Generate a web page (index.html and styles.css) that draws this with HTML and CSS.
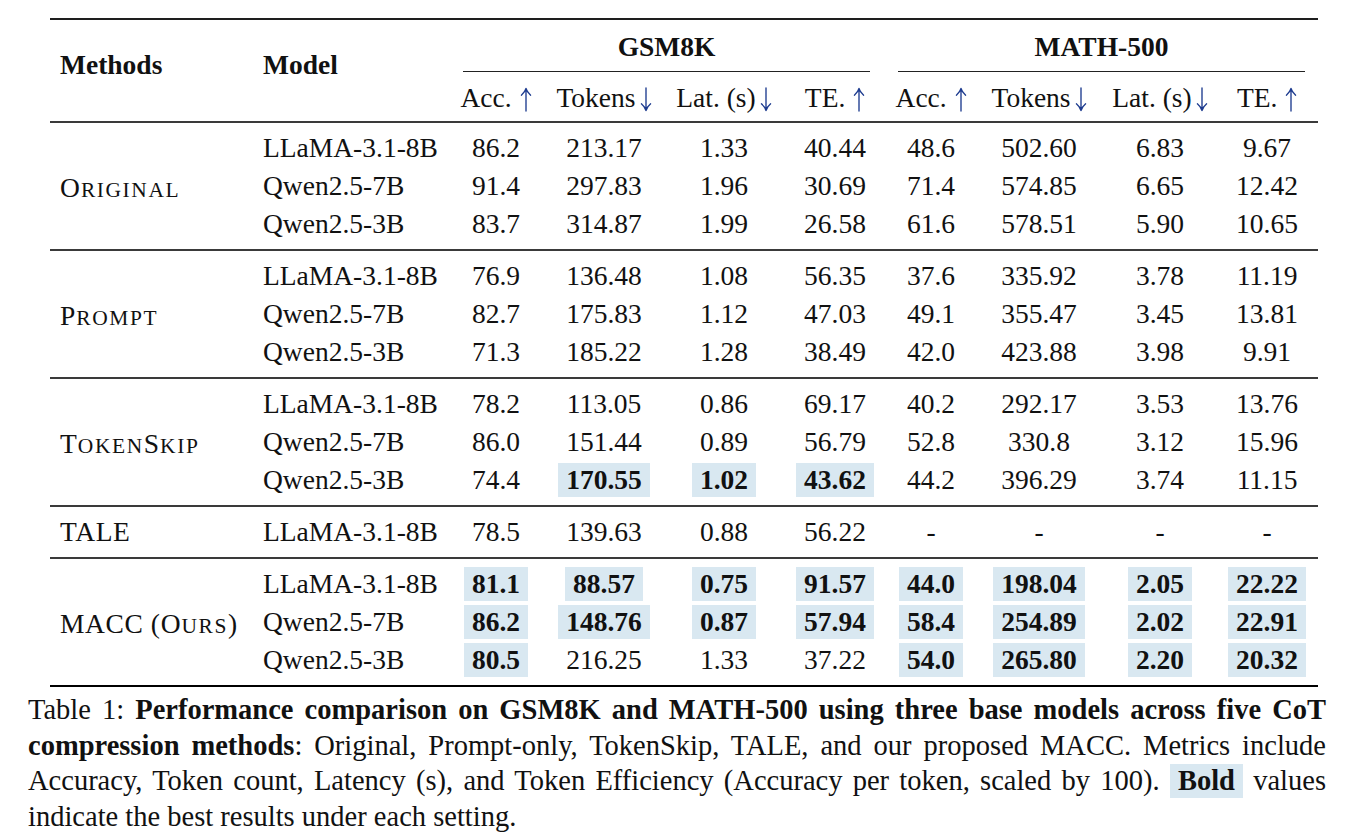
FILE: index.html
```html
<!DOCTYPE html>
<html lang="en">
<head>
<meta charset="utf-8">
<title>Table 1</title>
<link rel="stylesheet" href="styles.css">
</head>
<body>
<div class="page">
  <table class="results">
    <colgroup>
      <col class="c-method"><col class="c-model">
      <col class="c-acc1"><col class="c-tok1"><col class="c-lat1"><col class="c-te1">
      <col class="c-acc2"><col class="c-tok2"><col class="c-lat2"><col class="c-te2">
    </colgroup>
    <thead>
      <tr class="hrow1">
        <th rowspan="2" class="lbl">Methods</th>
        <th rowspan="2" class="lbl">Model</th>
        <th colspan="4" class="grp grp-a"><div class="grp-title">GSM8K</div></th>
        <th colspan="4" class="grp grp-b"><div class="grp-title">MATH-500</div></th>
      </tr>
      <tr class="hrow2">
        <th>Acc. <svg class="arr" viewBox="0 0 12 26" aria-hidden="true"><path d="M6 25V1.5M1.2 8.5C3.5 6.5 5.3 4.3 6 1.5C6.7 4.3 8.5 6.5 10.8 8.5"/></svg></th>
        <th>Tokens<svg class="arr tight" viewBox="0 0 12 26" aria-hidden="true"><path d="M6 1V24.5M1.2 17.5C3.5 19.5 5.3 21.7 6 24.5C6.7 21.7 8.5 19.5 10.8 17.5"/></svg></th>
        <th>Lat. (s)<svg class="arr tight" viewBox="0 0 12 26" aria-hidden="true"><path d="M6 1V24.5M1.2 17.5C3.5 19.5 5.3 21.7 6 24.5C6.7 21.7 8.5 19.5 10.8 17.5"/></svg></th>
        <th>TE. <svg class="arr" viewBox="0 0 12 26" aria-hidden="true"><path d="M6 25V1.5M1.2 8.5C3.5 6.5 5.3 4.3 6 1.5C6.7 4.3 8.5 6.5 10.8 8.5"/></svg></th>
        <th>Acc. <svg class="arr" viewBox="0 0 12 26" aria-hidden="true"><path d="M6 25V1.5M1.2 8.5C3.5 6.5 5.3 4.3 6 1.5C6.7 4.3 8.5 6.5 10.8 8.5"/></svg></th>
        <th>Tokens<svg class="arr tight" viewBox="0 0 12 26" aria-hidden="true"><path d="M6 1V24.5M1.2 17.5C3.5 19.5 5.3 21.7 6 24.5C6.7 21.7 8.5 19.5 10.8 17.5"/></svg></th>
        <th>Lat. (s)<svg class="arr tight" viewBox="0 0 12 26" aria-hidden="true"><path d="M6 1V24.5M1.2 17.5C3.5 19.5 5.3 21.7 6 24.5C6.7 21.7 8.5 19.5 10.8 17.5"/></svg></th>
        <th>TE. <svg class="arr" viewBox="0 0 12 26" aria-hidden="true"><path d="M6 25V1.5M1.2 8.5C3.5 6.5 5.3 4.3 6 1.5C6.7 4.3 8.5 6.5 10.8 8.5"/></svg></th>
      </tr>
    </thead>
    <tbody>
      <tr class="first">
        <td rowspan="3" class="method"><span class="sc">O<span class="scl">riginal</span></span></td>
        <td class="model">LLaMA-3.1-8B</td>
        <td>86.2</td><td>213.17</td><td>1.33</td><td>40.44</td>
        <td>48.6</td><td>502.60</td><td>6.83</td><td>9.67</td>
      </tr>
      <tr>
        <td class="model">Qwen2.5-7B</td>
        <td>91.4</td><td>297.83</td><td>1.96</td><td>30.69</td>
        <td>71.4</td><td>574.85</td><td>6.65</td><td>12.42</td>
      </tr>
      <tr class="last">
        <td class="model">Qwen2.5-3B</td>
        <td>83.7</td><td>314.87</td><td>1.99</td><td>26.58</td>
        <td>61.6</td><td>578.51</td><td>5.90</td><td>10.65</td>
      </tr>
    </tbody>
    <tbody>
      <tr class="first">
        <td rowspan="3" class="method"><span class="sc">P<span class="scl">rompt</span></span></td>
        <td class="model">LLaMA-3.1-8B</td>
        <td>76.9</td><td>136.48</td><td>1.08</td><td>56.35</td>
        <td>37.6</td><td>335.92</td><td>3.78</td><td>11.19</td>
      </tr>
      <tr>
        <td class="model">Qwen2.5-7B</td>
        <td>82.7</td><td>175.83</td><td>1.12</td><td>47.03</td>
        <td>49.1</td><td>355.47</td><td>3.45</td><td>13.81</td>
      </tr>
      <tr class="last">
        <td class="model">Qwen2.5-3B</td>
        <td>71.3</td><td>185.22</td><td>1.28</td><td>38.49</td>
        <td>42.0</td><td>423.88</td><td>3.98</td><td>9.91</td>
      </tr>
    </tbody>
    <tbody>
      <tr class="first">
        <td rowspan="3" class="method"><span class="sc">T<span class="scl">oken</span>S<span class="scl">kip</span></span></td>
        <td class="model">LLaMA-3.1-8B</td>
        <td>78.2</td><td>113.05</td><td>0.86</td><td>69.17</td>
        <td>40.2</td><td>292.17</td><td>3.53</td><td>13.76</td>
      </tr>
      <tr>
        <td class="model">Qwen2.5-7B</td>
        <td>86.0</td><td>151.44</td><td>0.89</td><td>56.79</td>
        <td>52.8</td><td>330.8</td><td>3.12</td><td>15.96</td>
      </tr>
      <tr class="last">
        <td class="model">Qwen2.5-3B</td>
        <td>74.4</td><td><span class="best">170.55</span></td><td><span class="best">1.02</span></td><td><span class="best">43.62</span></td>
        <td>44.2</td><td>396.29</td><td>3.74</td><td>11.15</td>
      </tr>
    </tbody>
    <tbody>
      <tr class="single">
        <td class="method">TALE</td>
        <td class="model">LLaMA-3.1-8B</td>
        <td>78.5</td><td>139.63</td><td>0.88</td><td>56.22</td>
        <td>-</td><td>-</td><td>-</td><td>-</td>
      </tr>
    </tbody>
    <tbody>
      <tr class="first">
        <td rowspan="3" class="method">MACC (<span class="sc">O<span class="scl">urs</span></span>)</td>
        <td class="model">LLaMA-3.1-8B</td>
        <td><span class="best">81.1</span></td><td><span class="best">88.57</span></td><td><span class="best">0.75</span></td><td><span class="best">91.57</span></td>
        <td><span class="best">44.0</span></td><td><span class="best">198.04</span></td><td><span class="best">2.05</span></td><td><span class="best">22.22</span></td>
      </tr>
      <tr>
        <td class="model">Qwen2.5-7B</td>
        <td><span class="best">86.2</span></td><td><span class="best">148.76</span></td><td><span class="best">0.87</span></td><td><span class="best">57.94</span></td>
        <td><span class="best">58.4</span></td><td><span class="best">254.89</span></td><td><span class="best">2.02</span></td><td><span class="best">22.91</span></td>
      </tr>
      <tr class="last">
        <td class="model">Qwen2.5-3B</td>
        <td><span class="best">80.5</span></td><td>216.25</td><td>1.33</td><td>37.22</td>
        <td><span class="best">54.0</span></td><td><span class="best">265.80</span></td><td><span class="best">2.20</span></td><td><span class="best">20.32</span></td>
      </tr>
    </tbody>
  </table>

  <div class="caption">
    <div class="cap-line">Table 1: <b>Performance comparison on GSM8K and MATH-500 using three base models across five CoT</b></div>
    <div class="cap-line"><b>compression methods</b>: Original, Prompt-only, TokenSkip, TALE, and our proposed MACC. Metrics include</div>
    <div class="cap-line">Accuracy, Token count, Latency (s), and Token Efficiency (Accuracy per token, scaled by 100). <span class="best cap-best">Bold</span> values</div>
    <div class="cap-line cap-last">indicate the best results under each setting.</div>
  </div>
</div>
</body>
</html>
```
FILE: styles.css
```css
html, body {
  margin: 0;
  padding: 0;
  background: #ffffff;
}

body {
  font-family: "Liberation Serif", "Times New Roman", serif;
  color: #111111;
}

.page {
  width: 1298px;
  margin-left: 28px;
  padding-top: 18px;
}

.results {
  margin-left: 22px;
  width: 1268px;
  table-layout: fixed;
  border-collapse: collapse;
  border-top: 2px solid #1e1e1e;
  border-bottom: 2px solid #000000;
  font-size: 27.5px;
}

.c-method { width: 203px; }
.c-model  { width: 197px; }
.c-acc1   { width: 92px; }
.c-tok1   { width: 124px; }
.c-lat1   { width: 116px; }
.c-te1    { width: 106px; }
.c-acc2   { width: 86px; }
.c-tok2   { width: 130px; }
.c-lat2   { width: 112px; }
.c-te2    { width: 102px; }

.results th,
.results td {
  padding: 0;
  text-align: center;
  white-space: nowrap;
}

.results th {
  font-weight: normal;
}

.results th.lbl {
  font-weight: bold;
  text-align: left;
  padding-left: 10px;
  vertical-align: top;
  padding-top: 27px;
  line-height: 36px;
}

.results .hrow1 th.grp {
  height: 52px;
  vertical-align: bottom;
}

.results th.grp-a { padding: 0 18px 0 13px; }
.results th.grp-b { padding: 0 13px 0 10px; }

.grp-title {
  font-weight: bold;
  line-height: 36px;
  padding-bottom: 6px;
  border-bottom: 1.5px solid #222222;
}

.results .hrow2 th {
  line-height: 38px;
  padding-top: 7px;
  padding-bottom: 4px;
}

.arr {
  display: inline-block;
  width: 12px;
  height: 25px;
  margin-left: 1px;
  vertical-align: -5px;
  fill: none;
  stroke: #1d3b8f;
  stroke-width: 1.4;
  stroke-linecap: round;
}

.arr.tight {
  margin-left: 4px;
}

tbody {
  border-top: 2px solid #3a3a3a;
}

.results td {
  line-height: 38px;
  height: 38px;
}

.results tr.first td {
  padding-top: 6px;
}

.results tr.last td {
  padding-bottom: 6px;
}

.results tr.single td {
  padding-top: 6px;
  padding-bottom: 6px;
}

.results td.method {
  text-align: left;
  padding-left: 10px;
  padding-top: 0;
  padding-bottom: 0;
  vertical-align: middle;
  letter-spacing: 0.6px;
}

.results tr.single td.method {
  padding-top: 6px;
  padding-bottom: 6px;
}

.results td.model {
  text-align: left;
  padding-left: 10px;
}

.sc {
  letter-spacing: 1px;
}

.scl {
  text-transform: uppercase;
  font-size: 0.78em;
  letter-spacing: 1.6px;
}

.best {
  display: inline-block;
  background: #d9e8f1;
  font-weight: bold;
  line-height: 34px;
  padding: 0 8px;
  vertical-align: baseline;
}

.caption {
  margin-top: 5px;
  font-size: 28.5px;
  line-height: 35.7px;
  color: #111111;
}

.cap-line {
  text-align: justify;
  text-align-last: justify;
  white-space: nowrap;
}

.cap-line.cap-last {
  text-align: left;
  text-align-last: left;
}

.cap-best {
  line-height: 34px;
  padding: 0 8px;
  vertical-align: baseline;
}
```
